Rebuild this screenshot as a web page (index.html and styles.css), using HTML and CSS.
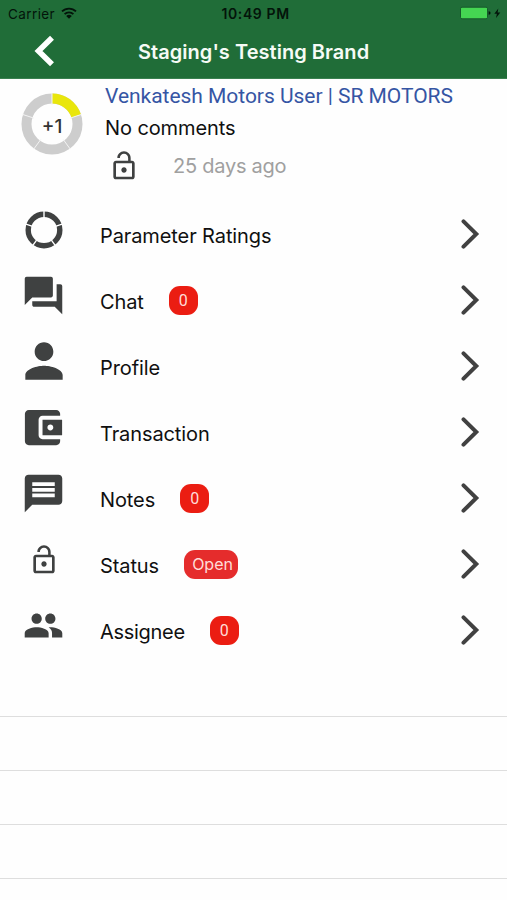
FILE: index.html
```html
<!DOCTYPE html>
<html lang="en">
<head>
<meta charset="utf-8">
<title>Staging's Testing Brand</title>
<link rel="stylesheet" href="styles.css">
</head>
<body>
<header class="top">
  <div class="status">
    <div class="carrier"><span>Carrier</span>
      <svg class="wifi" viewBox="0 0 16 12"><g fill="none" stroke="#03140a" stroke-width="1.8"><path d="M1 4.4a10 10 0 0 1 14 0"/><path d="M3.6 7.2a6.2 6.2 0 0 1 8.8 0"/></g><path fill="#03140a" d="M8 11.8L5.2 9a4 4 0 0 1 5.6 0z"/></svg>
    </div>
    <div class="clock">10:49 PM</div>
    <div class="power">
      <svg width="42" height="14" viewBox="0 0 42 14"><rect x=".5" y="1.2" width="27" height="11.6" rx="1.5" fill="#45d552" stroke="#16592a"/><path d="M28.6 5.2q2 0 2 1.8t-2 1.8z" fill="#03140a"/><path d="M38.3 2.5L34.3 7.8h2.6L36 12l4.3-5.5h-2.7z" fill="#03140a"/></svg>
    </div>
  </div>
  <div class="nav">
    <svg class="back" width="22" height="32" viewBox="0 0 22 32"><path d="M19 2.8L5.5 16 19 29.2" fill="none" stroke="#fff" stroke-width="5.6"/></svg>
    <h1>Staging's Testing Brand</h1>
  </div>
</header>
<section class="summary">
  <div class="score">
    <svg width="62" height="62" viewBox="-31 -31 62 62"><circle r="25.5" fill="none" stroke="#cdcdcd" stroke-width="10"/><path d="M0-25.5A25.5 25.5 0 0 1 24.25-7.88" fill="none" stroke="#e9e60c" stroke-width="10"/><path d="M0-19V-31M18.07-5.87L29.48-9.58M11.17 15.37L18.22 25.08M-11.17 15.37L-18.22 25.08M-18.07-5.87L-29.48-9.58" stroke="#f4f4f4" stroke-width="1"/></svg>
    <span>+1</span>
  </div>
  <div class="info">
    <div class="who">Venkatesh Motors User | SR MOTORS</div>
    <div class="comment">No comments</div>
    <div class="meta">
      <svg width="32" height="32" viewBox="0 0 24 24"><path d="M12 17c1.1 0 2-.9 2-2s-.9-2-2-2-2 .9-2 2 .9 2 2 2zm6-9h-1V6c0-2.76-2.24-5-5-5S7 3.24 7 6h1.9c0-1.71 1.39-3.1 3.1-3.1s3.1 1.39 3.1 3.1v2H6c-1.1 0-2 .9-2 2v10c0 1.1.9 2 2 2h12c1.1 0 2-.9 2-2V10c0-1.1-.9-2-2-2zm0 12H6V10h12v10z"/></svg>
      <span class="age">25 days ago</span>
    </div>
  </div>
</section>
<ul class="menu">
  <li><div class="icon ring"><svg width="38" height="38" viewBox="-19 -19 38 38"><circle r="15.8" fill="none" stroke="#3f4141" stroke-width="5.4"/><path d="M0-12V-19M11.4-3.7L18.07-5.87M7.05 9.7L11.17 15.37M-7.05 9.7L-11.17 15.37M-11.4-3.7L-18.07-5.87" stroke="#fff" stroke-width="1.4"/></svg></div><span class="label">Parameter Ratings</span><svg class="go" viewBox="0 0 20 30"><path d="M3.5 2.3L16.3 15 3.5 27.7"/></svg></li>
  <li><div class="icon"><svg width="45" height="45" viewBox="0 0 24 24"><path d="M21 6h-2v9H6v2c0 .55.45 1 1 1h11l4 4V7c0-.55-.45-1-1-1zm-4 6V3c0-.55-.45-1-1-1H3c-.55 0-1 .45-1 1v14l4-4h10c.55 0 1-.45 1-1z"/></svg></div><span class="label">Chat</span><span class="badge">0</span><svg class="go" viewBox="0 0 20 30"><path d="M3.5 2.3L16.3 15 3.5 27.7"/></svg></li>
  <li><div class="icon"><svg width="56" height="56" viewBox="0 0 24 24"><path d="M12 12c2.21 0 4-1.79 4-4s-1.79-4-4-4-4 1.79-4 4 1.79 4 4 4zm0 2c-2.67 0-8 1.34-8 4v2h16v-2c0-2.66-5.33-4-8-4z"/></svg></div><span class="label">Profile</span><svg class="go" viewBox="0 0 20 30"><path d="M3.5 2.3L16.3 15 3.5 27.7"/></svg></li>
  <li><div class="icon"><svg width="47" height="47" viewBox="0.5 0 24 24"><path d="M21 18v1c0 1.1-.9 2-2 2H5c-1.11 0-2-.9-2-2V5c0-1.1.89-2 2-2h14c1.1 0 2 .9 2 2v1h-9c-1.11 0-2 .9-2 2v8c0 1.1.89 2 2 2h9zm-9-2h10V8H12v8zm4-2.5c-.83 0-1.5-.67-1.5-1.5s.67-1.5 1.5-1.5 1.5.67 1.5 1.5-.67 1.5-1.5 1.5z"/></svg></div><span class="label">Transaction</span><svg class="go" viewBox="0 0 20 30"><path d="M3.5 2.3L16.3 15 3.5 27.7"/></svg></li>
  <li><div class="icon"><svg width="45" height="45" viewBox="0 0 24 24"><path d="M20 2H4c-1.1 0-1.99.9-1.99 2L2 22l4-4h14c1.1 0 2-.9 2-2V4c0-1.1-.9-2-2-2zm-2 12H6v-2h12v2zm0-3H6V9h12v2zm0-3H6V6h12v2z"/></svg></div><span class="label">Notes</span><span class="badge">0</span><svg class="go" viewBox="0 0 20 30"><path d="M3.5 2.3L16.3 15 3.5 27.7"/></svg></li>
  <li><div class="icon lock"><svg width="32" height="32" viewBox="0 0 24 24"><path d="M12 17c1.1 0 2-.9 2-2s-.9-2-2-2-2 .9-2 2 .9 2 2 2zm6-9h-1V6c0-2.76-2.24-5-5-5S7 3.24 7 6h1.9c0-1.71 1.39-3.1 3.1-3.1s3.1 1.39 3.1 3.1v2H6c-1.1 0-2 .9-2 2v10c0 1.1.9 2 2 2h12c1.1 0 2-.9 2-2V10c0-1.1-.9-2-2-2zm0 12H6V10h12v10z"/></svg></div><span class="label">Status</span><span class="badge open">Open</span><svg class="go" viewBox="0 0 20 30"><path d="M3.5 2.3L16.3 15 3.5 27.7"/></svg></li>
  <li><div class="icon"><svg width="41" height="41" viewBox="0 0 24 24"><path d="M16 11c1.66 0 2.99-1.34 2.99-3S17.66 5 16 5s-3 1.34-3 3 1.34 3 3 3zm-8 0c1.66 0 2.99-1.34 2.99-3S9.66 5 8 5 5 6.34 5 8s1.34 3 3 3zm0 2c-2.33 0-7 1.17-7 3.5V19h14v-2.5c0-2.33-4.67-3.5-7-3.5zm8 0c-.29 0-.62.02-.97.05 1.16.84 1.97 1.97 1.97 3.45V19h6v-2.5c0-2.33-4.67-3.5-7-3.5z"/></svg></div><span class="label tight">Assignee</span><span class="badge">0</span><svg class="go" viewBox="0 0 20 30"><path d="M3.5 2.3L16.3 15 3.5 27.7"/></svg></li>
</ul>
<div class="empty"><div></div><div></div><div></div><div></div></div>
</body>
</html>
```
FILE: styles.css
```css
* { box-sizing: border-box; }
body {
  margin: 0;
  width: 507px;
  height: 900px;
  overflow: hidden;
  background: #fefefe;
  color: #101010;
  font-family: Inter, "Liberation Sans", sans-serif;
}
svg { display: block; flex: none; fill: #3f4141; }
.top { height: 79px; background: #206d38; border-bottom: 1px solid #3a8050; }
.status {
  height: 27px;
  display: grid;
  grid-template-columns: 1fr auto 1fr;
  align-items: center;
  padding: 0 5px 0 8px;
  color: #03140a;
  font-size: 13.5px;
}
.carrier { display: flex; align-items: center; gap: 6px; letter-spacing: 0.4px; }
.wifi { width: 16px; height: 12px; margin-top: -2px; }
.clock { font-size: 14px; font-weight: 600; letter-spacing: 0.6px; width: 69px; white-space: nowrap; margin-left: 2px; }
.power { display: flex; justify-content: flex-end; margin-top: -1px; }
.nav { height: 51px; display: grid; grid-template-columns: 1fr auto 1fr; align-items: center; }
.back { margin-left: 33px; margin-top: -3px; }
h1 { margin: 0; color: #f6fbf6; font-size: 20px; line-height: 51px; font-weight: 600; width: 231px; white-space: nowrap; letter-spacing: 0.04px; }
.summary { height: 123px; display: flex; }
.score { width: 62px; height: 62px; margin: 14px 0 0 21px; display: grid; place-items: center; }
.score > * { grid-area: 1 / 1; }
.score span { font-size: 19px; font-weight: 500; color: #333; padding-top: 5px; }
.info { margin-left: 22px; white-space: nowrap; }
.who { font-family: Roboto, sans-serif; font-size: 21px; line-height: 34px; color: #3555a4; letter-spacing: -0.03px; }
.comment { font-size: 20px; line-height: 30px; letter-spacing: -0.1px; }
.meta { display: flex; align-items: center; height: 45px; padding-left: 3px; }
.age { margin-left: 33px; font-size: 20px; color: #a0a0a0; letter-spacing: -0.25px; }
.menu { list-style: none; margin: 0; padding: 0; }
.menu li { height: 66px; display: flex; align-items: center; padding-right: 27px; }
.icon { width: 87px; height: 56px; margin: -12px 13px 0 0; display: flex; align-items: center; justify-content: center; flex: none; }
.ring, .lock { margin-top: -11px; padding-left: 1px; }
.lock { margin-top: -10px; }
.label { font-size: 20px; letter-spacing: -0.1px; white-space: nowrap; padding-top: 1px; }
.tight { letter-spacing: -0.3px; }
.badge {
  margin: -1px 0 0 25px;
  width: 29px;
  height: 29px;
  border-radius: 11px;
  background: #eb1d12;
  color: #ffdcd8;
  font: 16px/29px Roboto, sans-serif;
  text-align: center;
}
.open { width: 54px; padding-left: 3px; background: #e52c2c; font-family: Inter, sans-serif; }
.go { width: 20px; height: 30px; margin: -2px 0 0 auto; }
.go path { fill: none; stroke: #414141; stroke-width: 4; stroke-linecap: round; }
.empty div { height: 54px; border-bottom: 1px solid #dedede; }
.empty div:first-child { height: 53px; }
```
